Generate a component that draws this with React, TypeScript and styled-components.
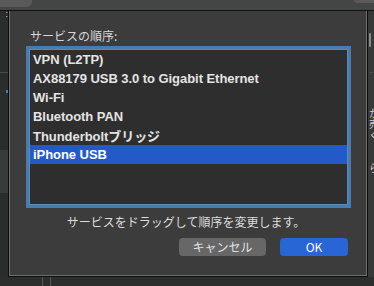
import React from "react";
import styled, { createGlobalStyle } from "styled-components";

const Global = createGlobalStyle`
  *, *::before, *::after { box-sizing: border-box; }
  html, body { margin: 0; padding: 0; background: #2c2d2d; }
  body { font-family: "Liberation Sans", "Noto Sans CJK JP", sans-serif; }
`;

const Screen = styled.div`
  width: 374px;
  height: 286px;
  overflow: hidden;
  display: flex;
  flex-direction: column;
  background: #2c2d2d;
`;

const TopBar = styled.div`
  height: 11px;
  flex: none;
  display: flex;
  justify-content: space-between;
  align-items: flex-start;
  background: #444545;
  border-bottom: 1px solid #121212;
`;

const ToolButton = styled.div<{ $w: number; $h: number; $left?: boolean }>`
  width: ${(p) => p.$w}px;
  height: ${(p) => p.$h}px;
  background: #595959;
  border-radius: ${(p) => (p.$left ? "0 0 5px 0" : "0 0 0 5px")};
`;

const Middle = styled.div`
  display: flex;
  flex: none;
  height: 266px;
`;

const LeftStrip = styled.div`
  width: 8px;
  flex: none;
  display: flex;
  flex-direction: column;
  background: #2b2c2c;
`;

const StripGap = styled.div<{ $h: number; $bg?: string }>`
  height: ${(p) => p.$h}px;
  flex: none;
  background: ${(p) => p.$bg || "transparent"};
  position: relative;
`;

const Colon = styled.span`
  position: absolute;
  right: 0;
  top: -2px;
  font-size: 9px;
  color: #cfcfcf;
  line-height: 10px;
`;

const Dot = styled.div`
  position: absolute;
  right: 0;
  top: 0;
  width: 2px;
  height: 3px;
  background: #3f7fd0;
`;

const Dialog = styled.div`
  width: 360px;
  flex: none;
  border: 1px solid #0c0c0c;
  border-top: none;
  background: #3c3c3c;
  box-shadow: inset 1px 0 0 #6e6e6e, inset -1px 0 0 #6e6e6e, inset 0 -1px 0 #6e6e6e;
  padding: 18px 19px 20px 20px;
  display: flex;
  flex-direction: column;
`;

const Title = styled.div`
  font-family: "Noto Sans CJK JP", "Liberation Sans", sans-serif;
  font-size: 12px;
  line-height: 14px;
  color: #d8d8d8;
  margin-left: 1px;
`;

const ListBox = styled.div`
  margin-top: 6px;
  height: 156px;
  flex: none;
  border: 1px solid #5a8bbd;
  box-shadow: 0 0 0 3px #4a7bab;
  background: #2e2e2e;
  display: flex;
  flex-direction: column;
`;

const Row = styled.div<{ $selected?: boolean }>`
  height: 19px;
  flex: none;
  display: flex;
  align-items: center;
  padding-left: 3px;
  font-family: "Liberation Sans", "Noto Sans CJK JP", sans-serif;
  font-size: 13px;
  font-weight: bold;
  letter-spacing: -0.05px;
  color: ${(p) => (p.$selected ? "#ffffff" : "#e4e4e4")};
  background: ${(p) => (p.$selected ? "#225bc9" : "transparent")};
  white-space: nowrap;
`;

const Help = styled.div`
  margin-top: 10px;
  font-family: "Noto Sans CJK JP", "Liberation Sans", sans-serif;
  font-size: 12px;
  line-height: 14px;
  color: #dcdcdc;
  text-align: center;
  padding-right: 5px;
`;

const Buttons = styled.div`
  margin-top: 9px;
  display: flex;
  justify-content: flex-end;
  gap: 14px;
`;

const Button = styled.button<{ $primary?: boolean; $w: number }>`
  width: ${(p) => p.$w}px;
  height: 18px;
  padding: 0;
  border: none;
  border-radius: 4px;
  background: ${(p) => (p.$primary ? "#2866d6" : "#676767")};
  color: ${(p) => (p.$primary ? "#ffffff" : "#e2e2e2")};
  font-family: "Noto Sans CJK JP", "Liberation Sans", sans-serif;
  font-size: 12px;
  line-height: 18px;
  display: flex;
  align-items: center;
  justify-content: center;
`;

const RightStrip = styled.div`
  flex: 1;
  min-width: 0;
  background: #373838;
  overflow: hidden;
  display: flex;
  flex-direction: column;
  padding-left: 1px;
`;

const RightGap = styled.div<{ $h: number }>`
  height: ${(p) => p.$h}px;
  flex: none;
`;

const Scroller = styled.div`
  width: 2px;
  height: 14px;
  background: #8a8a8a;
  border-radius: 1px;
  flex: none;
`;

const Line = styled.div`
  height: 1px;
  background: #4a4a4a;
  flex: none;
`;

const PeekText = styled.div`
  font-family: "Noto Sans CJK JP", sans-serif;
  font-size: 10px;
  line-height: 11px;
  color: #d0d0d0;
  white-space: pre;
`;

const BottomStrip = styled.div`
  flex: 1;
  display: flex;
  background: #2c2d2d;
`;

const BottomCell = styled.div<{ $w: number; $edge?: boolean }>`
  width: ${(p) => p.$w}px;
  flex: none;
  border-right: ${(p) => (p.$edge ? "1px solid #555" : "none")};
`;

const items = [
  "VPN (L2TP)",
  "AX88179 USB 3.0 to Gigabit Ethernet",
  "Wi-Fi",
  "Bluetooth PAN",
  "Thunderboltブリッジ",
  "iPhone USB",
];

export default function App() {
  return (
    <>
      <Global />
      <Screen>
        <TopBar>
          <ToolButton $w={32} $h={7} $left />
          <ToolButton $w={20} $h={3} />
        </TopBar>
        <Middle>
          <LeftStrip>
            <StripGap $h={29}>
              <Colon>:</Colon>
            </StripGap>
            <StripGap $h={32} />
            <Line />
            <StripGap $h={17} />
            <StripGap $h={60}>
              <Dot />
            </StripGap>
            <StripGap $h={43} $bg="#393a3a" />
            <StripGap $h={20} />
          </LeftStrip>
          <Dialog>
            <Title>サービスの順序:</Title>
            <ListBox>
              {items.map((t, i) => (
                <Row key={t} $selected={i === items.length - 1}>
                  {t}
                </Row>
              ))}
            </ListBox>
            <Help>サービスをドラッグして順序を変更します。</Help>
            <Buttons>
              <Button $w={87}>キャンセル</Button>
              <Button $w={68} $primary>
                OK
              </Button>
            </Buttons>
          </Dialog>
          <RightStrip>
            <RightGap $h={22} />
            <Scroller />
            <RightGap $h={25} />
            <Line />
            <RightGap $h={34} />
            <PeekText>{"か\n売\nく\n\n\nら"}</PeekText>
          </RightStrip>
        </Middle>
        <BottomStrip>
          <BottomCell $w={43} $edge />
          <BottomCell $w={8} $edge />
        </BottomStrip>
      </Screen>
    </>
  );
}
